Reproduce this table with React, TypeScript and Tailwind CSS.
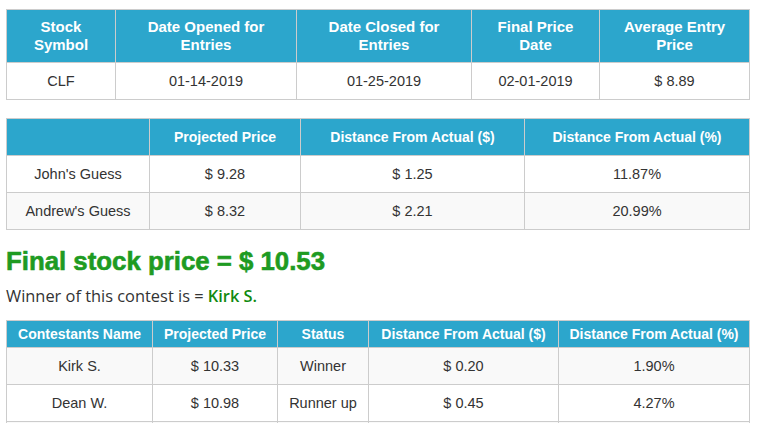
import React from 'react'

const th = 'border border-[#cccccc] bg-[#2ca6cc] text-white font-bold text-center align-middle'
const td = 'border border-[#cccccc] text-center align-middle px-2 py-2 leading-5 text-[14.5px] text-[#333333]'

const summary = {
  symbol: 'CLF',
  opened: '01-14-2019',
  closed: '01-25-2019',
  finalDate: '02-01-2019',
  avgEntry: '$ 8.89',
}

const guesses = [
  { name: "John's Guess", price: '$ 9.28', dist: '$ 1.25', pct: '11.87%' },
  { name: "Andrew's Guess", price: '$ 8.32', dist: '$ 2.21', pct: '20.99%' },
]

const contestants = [
  { name: 'Kirk S.', price: '$ 10.33', status: 'Winner', dist: '$ 0.20', pct: '1.90%' },
  { name: 'Dean W.', price: '$ 10.98', status: 'Runner up', dist: '$ 0.45', pct: '4.27%' },
]

export default function App() {
  return (
    <div className="w-[757px] h-[423px] overflow-hidden bg-white px-[6px] pt-[9px] text-[14px] font-['Liberation_Sans',Arial,sans-serif]">
      {/* Contest summary */}
      <table className="w-[744px] table-fixed border-collapse">
        <thead>
          <tr>
            <th className={`${th} w-[109px] px-2 py-2 text-[15px] leading-[18px]`}>Stock<br />Symbol</th>
            <th className={`${th} w-[181px] px-2 py-2 text-[15px] leading-[18px]`}>Date Opened for<br />Entries</th>
            <th className={`${th} w-[175px] px-2 py-2 text-[15px] leading-[18px]`}>Date Closed for<br />Entries</th>
            <th className={`${th} w-[128px] px-2 py-2 text-[15px] leading-[18px]`}>Final Price<br />Date</th>
            <th className={`${th} px-2 py-2 text-[15px] leading-[18px]`}>Average Entry<br />Price</th>
          </tr>
        </thead>
        <tbody>
          <tr className="bg-white">
            <td className={td}>{summary.symbol}</td>
            <td className={td}>{summary.opened}</td>
            <td className={td}>{summary.closed}</td>
            <td className={td}>{summary.finalDate}</td>
            <td className={td}>{summary.avgEntry}</td>
          </tr>
        </tbody>
      </table>

      {/* Guesses */}
      <table className="mt-[18px] w-[744px] table-fixed border-collapse">
        <thead>
          <tr>
            <th className={`${th} w-[143px] px-2 py-2 text-[14px] leading-5`}></th>
            <th className={`${th} w-[151px] px-2 py-2 text-[14px] leading-5`}>Projected Price</th>
            <th className={`${th} w-[224px] px-2 py-2 text-[14px] leading-5`}>Distance From Actual ($)</th>
            <th className={`${th} px-2 py-2 text-[14px] leading-5`}>Distance From Actual (%)</th>
          </tr>
        </thead>
        <tbody>
          {guesses.map((g, i) => (
            <tr key={g.name} className={i % 2 === 1 ? 'bg-[#f9f9f9]' : 'bg-white'}>
              <td className={td}>{g.name}</td>
              <td className={td}>{g.price}</td>
              <td className={td}>{g.dist}</td>
              <td className={td}>{g.pct}</td>
            </tr>
          ))}
        </tbody>
      </table>

      <h2 className="mt-[17px] text-[25.8px] leading-[28px] font-bold text-[#1e9b22] font-['Liberation_Sans',Arial,sans-serif] [-webkit-text-stroke:0.6px_#1e9b22]">
        Final stock price = $ 10.53
      </h2>

      <p className="mt-[10px] text-[16.4px] leading-[22px] text-[#333333] font-['Open_Sans',sans-serif]">
        Winner of this contest is = <span className="font-semibold text-[#108a10]">Kirk S.</span>
      </p>

      {/* Contestants */}
      <table className="mt-[13px] w-[744px] table-fixed border-collapse">
        <thead>
          <tr>
            <th className={`${th} w-[146px] px-1 py-1 text-[14px] leading-[18px]`}>Contestants Name</th>
            <th className={`${th} w-[125px] px-1 py-1 text-[14px] leading-[18px]`}>Projected Price</th>
            <th className={`${th} w-[91px] px-1 py-1 text-[14px] leading-[18px]`}>Status</th>
            <th className={`${th} w-[190px] px-1 py-1 text-[14px] leading-[18px]`}>Distance From Actual ($)</th>
            <th className={`${th} px-1 py-1 text-[14px] leading-[18px]`}>Distance From Actual (%)</th>
          </tr>
        </thead>
        <tbody>
          {contestants.map((c, i) => (
            <tr key={c.name} className={i % 2 === 0 ? 'bg-[#f9f9f9]' : 'bg-white'}>
              <td className={td}>{c.name}</td>
              <td className={td}>{c.price}</td>
              <td className={td}>{c.status}</td>
              <td className={td}>{c.dist}</td>
              <td className={td}>{c.pct}</td>
            </tr>
          ))}
          {/* next row starts just past the fold */}
          <tr className="bg-[#f9f9f9]">
            <td className={td}>&nbsp;</td>
            <td className={td}>&nbsp;</td>
            <td className={td}>&nbsp;</td>
            <td className={td}>&nbsp;</td>
            <td className={td}>&nbsp;</td>
          </tr>
        </tbody>
      </table>
    </div>
  )
}
